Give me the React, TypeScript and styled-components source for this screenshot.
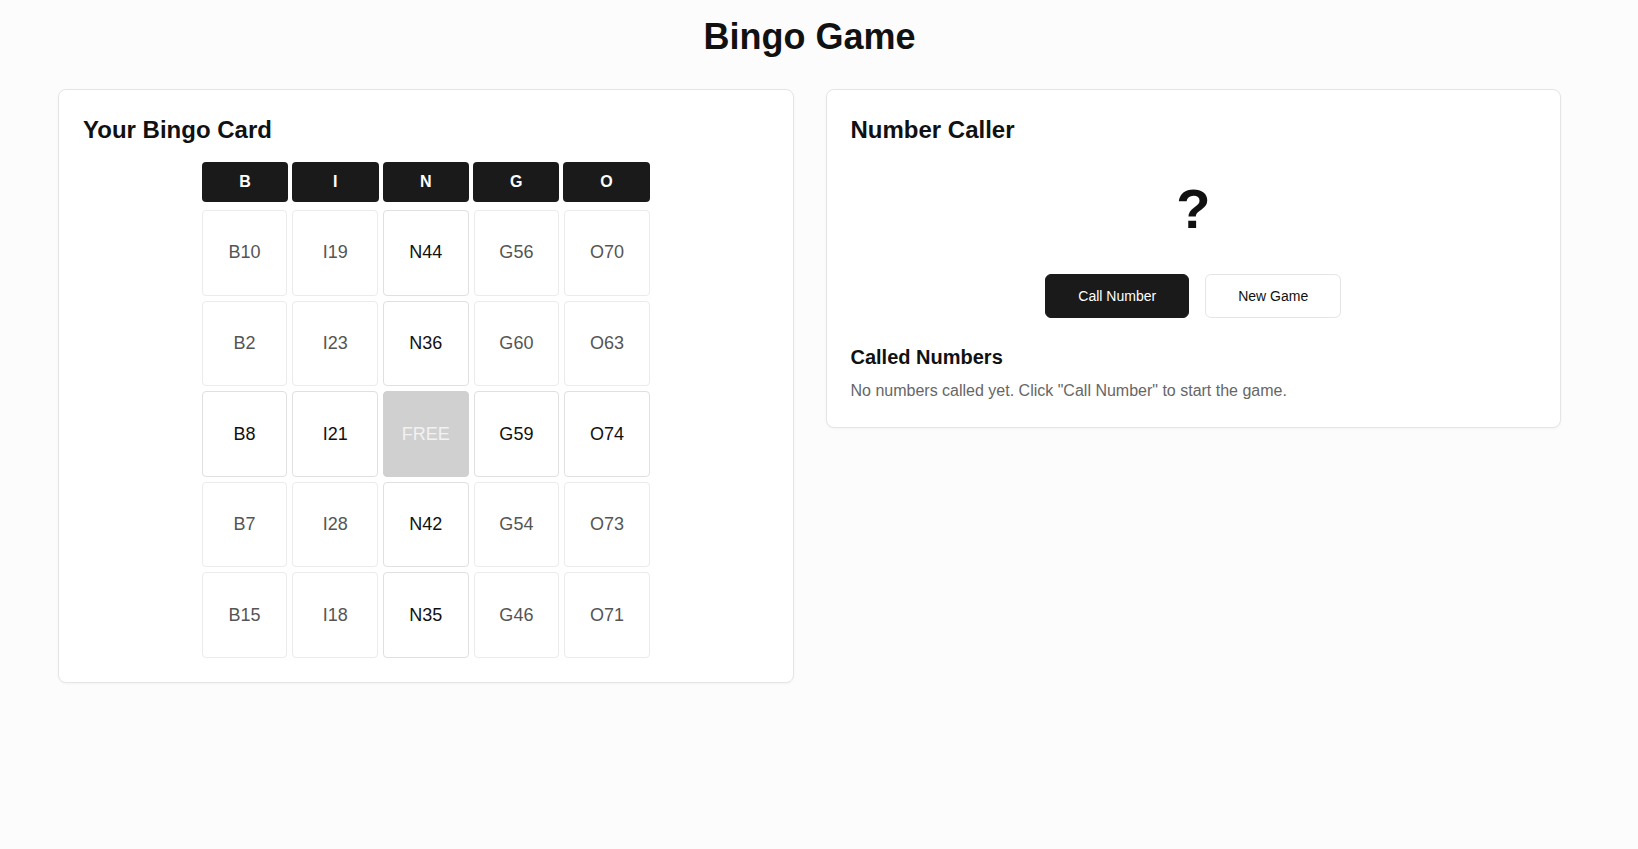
import React from "react";
import styled, { createGlobalStyle } from "styled-components";

const GlobalStyle = createGlobalStyle`
  html, body {
    margin: 0;
    padding: 0;
    background: #fcfcfc;
    font-family: "Liberation Sans", Arial, sans-serif;
    color: #111;
  }
  * { box-sizing: border-box; }
`;

const Page = styled.div`
  padding: 16px 77px 40px 58px;
`;

const Title = styled.h1`
  margin: 0 0 32px;
  font-size: 36px;
  line-height: 41px;
  font-weight: 700;
  text-align: center;
  color: #111;
`;

const Columns = styled.div`
  display: grid;
  grid-template-columns: 1fr 1fr;
  gap: 32px;
  align-items: start;
`;

const Card = styled.section`
  background: #fff;
  border: 1px solid #e5e5e5;
  border-radius: 8px;
  box-shadow: 0 1px 3px rgba(0, 0, 0, 0.04);
  padding: 24px;
`;

const CardTitle = styled.h2`
  margin: 0;
  font-size: 24px;
  line-height: 32px;
  font-weight: 700;
  color: #111;
`;

const Board = styled.div`
  width: 448px;
  margin: 16px auto 0;
`;

const Grid = styled.div`
  display: grid;
  grid-template-columns: repeat(5, 1fr);
  gap: 5px;
`;

const HeaderRow = styled(Grid)`
  gap: 4px;
  margin-bottom: 8px;
`;

const HeaderCell = styled.div`
  background: #1a1a1a;
  color: #fff;
  border-radius: 4px;
  height: 40px;
  display: flex;
  align-items: center;
  justify-content: center;
  font-size: 16px;
  font-weight: 700;
`;

const Cell = styled.div<{ $strong?: boolean; $free?: boolean }>`
  aspect-ratio: 1 / 1;
  display: flex;
  align-items: center;
  justify-content: center;
  border-radius: 4px;
  border: 1px solid ${(p) => (p.$free ? "#d0d0d0" : p.$strong ? "#e0e0e0" : "#ebebeb")};
  background: ${(p) => (p.$free ? "#d0d0d0" : "#fff")};
  color: ${(p) => (p.$free ? "#f2f2f2" : p.$strong ? "#111" : "#555")};
  font-size: 18px;
`;

const Question = styled.div`
  margin: 31px 0 33px;
  font-size: 56px;
  line-height: 64px;
  font-weight: 700;
  text-align: center;
  color: #111;
`;

const ButtonRow = styled.div`
  display: flex;
  justify-content: center;
  gap: 16px;
`;

const Button = styled.button<{ $primary?: boolean }>`
  font-family: "Liberation Sans", Arial, sans-serif;
  font-size: 14px;
  line-height: 20px;
  padding: 11px 32px;
  border-radius: 6px;
  border: 1px solid ${(p) => (p.$primary ? "#1a1a1a" : "#e5e5e5")};
  background: ${(p) => (p.$primary ? "#1a1a1a" : "#fff")};
  color: ${(p) => (p.$primary ? "#fff" : "#111")};
  cursor: pointer;
`;

const SubTitle = styled.h3`
  margin: 27px 0 10px;
  font-size: 20px;
  line-height: 24px;
  font-weight: 700;
  color: #111;
`;

const Note = styled.p`
  margin: 0;
  font-size: 16px;
  line-height: 24px;
  color: #666;
`;

const letters = ["B", "I", "N", "G", "O"];
const numbers: (number | null)[][] = [
  [10, 19, 44, 56, 70],
  [2, 23, 36, 60, 63],
  [8, 21, null, 59, 74],
  [7, 28, 42, 54, 73],
  [15, 18, 35, 46, 71],
];

export default function App() {
  return (
    <>
      <GlobalStyle />
      <Page>
        <Title>Bingo Game</Title>
        <Columns>
          <Card>
            <CardTitle>Your Bingo Card</CardTitle>
            <Board>
              <HeaderRow>
                {letters.map((l) => (
                  <HeaderCell key={l}>{l}</HeaderCell>
                ))}
              </HeaderRow>
              <Grid>
                {numbers.map((row, r) =>
                  row.map((n, c) =>
                    n === null ? (
                      <Cell key={`${r}-${c}`} $free>
                        FREE
                      </Cell>
                    ) : (
                      <Cell key={`${r}-${c}`} $strong={r === 2 || c === 2}>
                        {letters[c]}
                        {n}
                      </Cell>
                    )
                  )
                )}
              </Grid>
            </Board>
          </Card>
          <Card>
            <CardTitle>Number Caller</CardTitle>
            <Question>?</Question>
            <ButtonRow>
              <Button $primary>Call Number</Button>
              <Button>New Game</Button>
            </ButtonRow>
            <SubTitle>Called Numbers</SubTitle>
            <Note>No numbers called yet. Click "Call Number" to start the game.</Note>
          </Card>
        </Columns>
      </Page>
    </>
  );
}
